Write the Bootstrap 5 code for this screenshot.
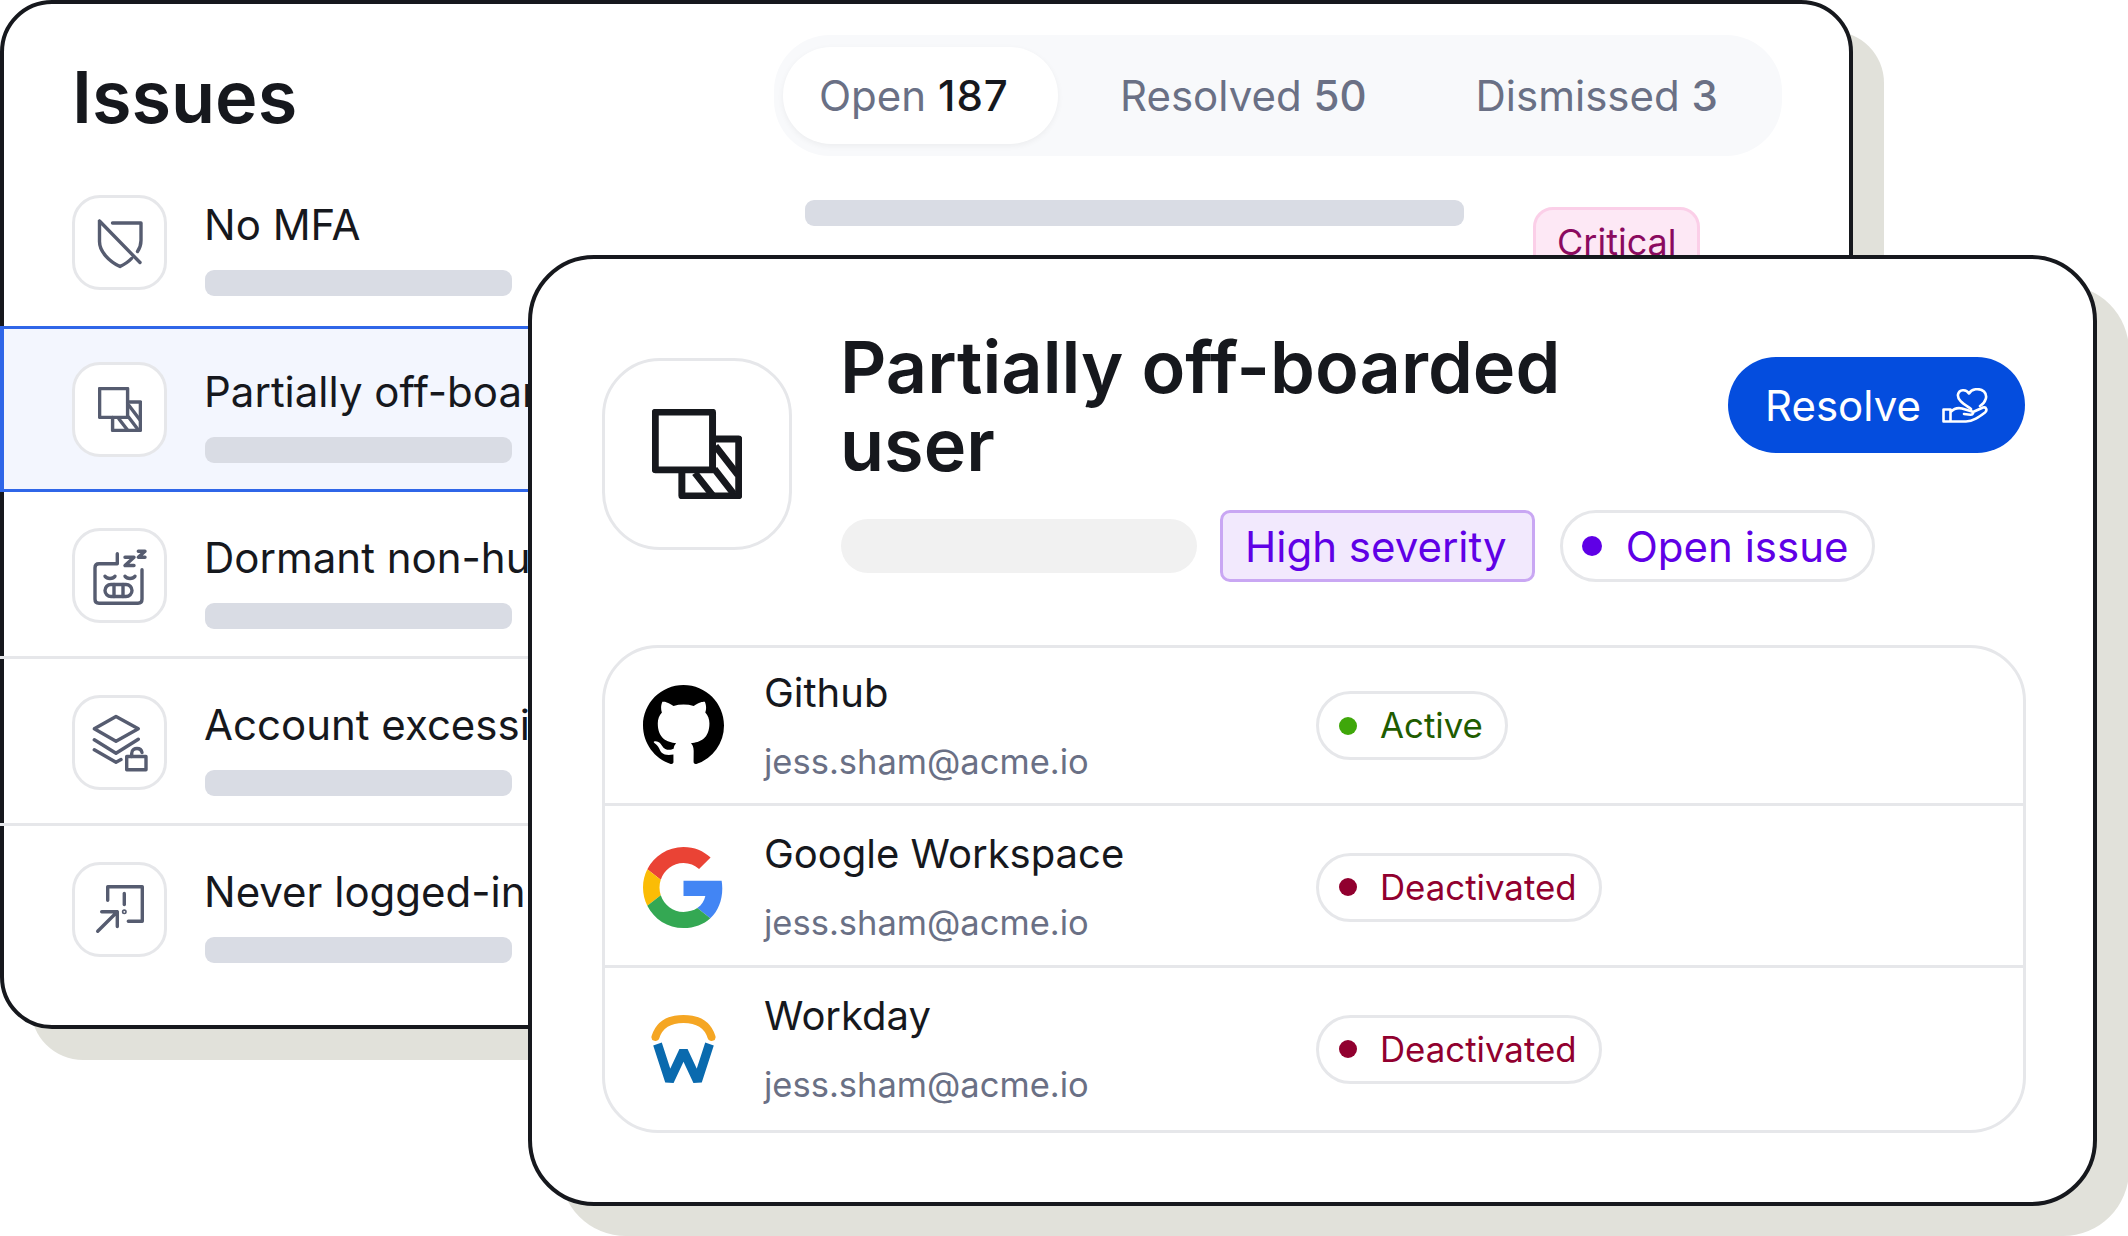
<!DOCTYPE html>
<html lang="en">

<head>
  <meta charset="UTF-8">
  <meta name="viewport" content="width=device-width, initial-scale=1.0">
  <title>Issues</title>
  <link href="https://cdn.jsdelivr.net/npm/bootstrap@5.3.0/dist/css/bootstrap.min.css" rel="stylesheet">
  <style>
    html, body {
      margin: 0;
      width: 2128px;
      height: 1236px;
      overflow: hidden;
      background: #fff;
      font-family: Inter, "Liberation Sans", sans-serif;
      font-variant-ligatures: none;
      color: #16181d;
    }
    .stage {
      position: relative;
      width: 2128px;
      height: 1236px;
      overflow: hidden;
    }
    .panel-back {
      width: 1853px;
      height: 1029px;
      background: #fff;
      border: 4px solid #16181d;
      border-radius: 52px;
      box-shadow: 31px 31px 0 #e1e1da;
    }
    .panel-front {
      position: absolute;
      left: 528px;
      top: 255px;
      width: 1569px;
      height: 951px;
      padding: 69px 68px 0 70px;
      background: #fff;
      border: 4px solid #16181d;
      border-radius: 66px;
      box-shadow: 32px 30px 0 #e1e1da;
    }
    .back-head {
      padding: 31px 67px 0 68px;
      height: 155px;
    }
    .back-head h1 {
      height: 121px;
      font-size: 72px;
      font-weight: 600;
      line-height: 123px;
      margin: 0;
    }
    .tab-wrap {
      width: 1008px;
      height: 121px;
      padding: 12px 9px;
      background: #f8f9fb;
      border-radius: 56px;
    }
    .tab-wrap .nav-link {
      height: 97px;
      padding: 0 36px;
      font-size: 42px;
      color: #6a7085;
      background: none;
      border-radius: 48px;
      white-space: nowrap;
    }
    .tab-wrap .nav-link b { font-weight: 500; }
    .tab-wrap .nav-link.active {
      width: 275px;
      color: #6a7085;
      background: #fff;
      box-shadow: 0 2px 6px rgba(22, 24, 29, .05);
    }
    .tab-wrap .nav-link.active b {
      color: #16181d;
      letter-spacing: 1px;
    }
    .tab-wrap .tab-two { margin-left: 26px; }
    .tab-wrap .tab-three { margin-left: 37px; }
    .issue-row {
      height: 166.7px;
      margin-left: -4px;
      padding: 33px 0 0 72px;
      border-top: 3px solid transparent;
      border-bottom: 3px solid #e6e7ea;
    }
    .issue-row.first-row { border-bottom-color: transparent; }
    .issue-row.picked {
      padding-left: 68px;
      background: #f3f6fe;
      border: 3px solid #2f66e8;
      border-left-width: 4px;
    }
    .icon-tile {
      width: 95px;
      height: 95px;
      flex: none;
      background: #fff;
      border: 3px solid #e6e7ea;
      border-radius: 28px;
    }
    .icon-tile svg {
      width: 60px;
      height: 60px;
      fill: none;
      stroke: #565c70;
      stroke-width: 3.4;
      stroke-linecap: round;
      stroke-linejoin: round;
    }
    .issue-name {
      width: 307px;
      margin: 6px 0 0 38px;
      flex: none;
    }
    .issue-name div:first-child {
      margin-left: -1px;
      font-size: 42px;
      line-height: 48px;
      white-space: nowrap;
    }
    .ghost-bar {
      height: 26px;
      background: #d9dce4;
      border-radius: 9px;
    }
    .issue-name .ghost-bar { margin-top: 21px; }
    .row-bar {
      width: 659px;
      margin: 5px 0 0 293px;
      flex: none;
    }
    .crit-tag {
      margin: 12px 0 0 69px;
      padding: 10px 21px;
      font-size: 36px;
      line-height: 44px;
      color: #8b0a5f;
      background: #fde8f5;
      border: 3px solid #fbcfe8;
      border-radius: 20px;
    }
    .tile-big {
      width: 190px;
      height: 192px;
      flex: none;
      margin: 30px 48px 0 0;
      border: 3px solid #e6e7ea;
      border-radius: 58px;
    }
    .tile-big svg { width: 90px; height: 90px; }
    .head-text {
      width: 888px;
      flex: none;
    }
    .panel-front h2 {
      width: 760px;
      margin: 0;
      font-size: 72px;
      font-weight: 600;
      line-height: 78px;
    }
    .tag-line {
      margin-top: 26px;
      gap: 23px;
    }
    .tag-line > div { flex: none; }
    .tag-line .tag-open { margin-left: 2px; }
    .ghost-pill {
      width: 356px;
      height: 54px;
      margin-left: 1px;
      background: #f1f1f1;
      border-radius: 27px;
    }
    .tag-soft, .tag-open {
      height: 72px;
      font-size: 42px;
      color: #5f00e6;
      border: 3px solid;
      white-space: nowrap;
    }
    .tag-soft {
      padding: 0 25px 0 22px;
      background: #f2e9fd;
      border-color: #c9a7f3;
      border-radius: 10px;
    }
    .tag-open {
      padding: 0 24px 0 19px;
      gap: 24px;
      background: #fff;
      border-color: #e6e7ea;
      border-radius: 36px;
    }
    .tag-open i {
      width: 20px;
      height: 20px;
      background: #5f00e6;
      border-radius: 50%;
    }
    .btn.btn-resolve {
      width: 297px;
      height: 96px;
      margin-top: 29px;
      flex: none;
      gap: 21px;
      padding: 0;
      font-size: 42px;
      color: #fff;
      background: #044dde;
      border: 0;
      border-radius: 48px;
    }
    .btn-resolve svg {
      width: 46px;
      height: 35px;
      fill: none;
      stroke: #fff;
      stroke-width: 2.6;
      stroke-linecap: round;
      stroke-linejoin: round;
    }
    .svc-box {
      margin-top: 63px;
      width: 1424px;
      height: 488px;
      background: #fff;
      border: 3px solid #e6e7ea;
      border-radius: 56px;
      overflow: hidden;
    }
    .svc-item {
      height: 162px;
      padding: 3px 0 0 38px;
      border-bottom: 3px solid #e6e7ea;
    }
    .svc-item:first-child {
      height: 158px;
      padding-top: 0;
    }
    .svc-item:last-child {
      padding-top: 0;
      border-bottom: 0;
    }
    .svc-logo {
      width: 81px;
      flex: none;
    }
    .svc-text {
      width: 552px;
      margin-left: 40px;
      flex: none;
    }
    .svc-text div:first-child {
      font-size: 40px;
      line-height: 48px;
      margin-top: 1px;
    }
    .svc-text div:last-child {
      margin-top: 23px;
      font-size: 34.5px;
      line-height: 44px;
      color: #6a7085;
    }
    .state-pill {
      height: 69px;
      padding: 0 22px 0 20px;
      gap: 23px;
      font-size: 34.8px;
      background: #fff;
      border: 3px solid #e6e7ea;
      border-radius: 35px;
    }
    .state-pill i {
      width: 18px;
      height: 18px;
      border-radius: 50%;
      background: currentColor;
    }
    .state-on { color: #1f5c00; }
    .state-on i { background: #3fa70a; }
    .state-off { color: #91002f; }
  </style>
</head>

<body>
  <svg width="0" height="0" class="d-block position-absolute">
    <symbol id="split-icon" viewBox="0 0 44 45" preserveAspectRatio="none">
      <path d="M1.6 1.6H29.6V30.4H1.6Z"/>
      <path d="M29.6 15H42.4V43.4H14.6V30.4"/>
      <path d="M31 18.5L42 33M30.5 30L40 42.5M21 32L29.5 43"/>
    </symbol>
  </svg>

  <div class="stage">
    <div class="panel-back">
      <div class="back-head d-flex justify-content-between">
        <h1>Issues</h1>
        <div class="tab-wrap">
          <ul class="nav flex-nowrap">
            <li class="nav-item"><a class="nav-link active d-flex align-items-center" href="#">Open&nbsp;<b>187</b></a></li>
            <li class="nav-item tab-two"><a class="nav-link d-flex align-items-center" href="#">Resolved&nbsp;<b>50</b></a></li>
            <li class="nav-item tab-three"><a class="nav-link d-flex align-items-center" href="#">Dismissed&nbsp;<b>3</b></a></li>
          </ul>
        </div>
      </div>

      <div class="issue-row first-row d-flex align-items-start">
        <div class="icon-tile d-flex align-items-center justify-content-center">
          <svg viewBox="17 17.5 60 60">
            <path d="M26.5 25.5L67 67M26.5 25.5V46C26.5 56 36 66 47 71C51 69 55.500 66.500 58.500 63M39.500 27.500H68V45C68 49 66.500 53 64.500 56"/>
          </svg>
        </div>
        <div class="issue-name">
          <div>No MFA</div>
          <div class="ghost-bar"></div>
        </div>
        <div class="ghost-bar row-bar"></div>
        <div class="crit-tag">Critical</div>
      </div>

      <div class="issue-row picked d-flex align-items-start">
        <div class="icon-tile d-flex align-items-center justify-content-center">
          <svg viewBox="-8 -8 60 60"><use href="#split-icon" width="44" height="45"/></svg>
        </div>
        <div class="issue-name">
          <div>Partially off-boarded user</div>
          <div class="ghost-bar"></div>
        </div>
      </div>

      <div class="issue-row d-flex align-items-start">
        <div class="icon-tile d-flex align-items-center justify-content-center">
          <svg viewBox="17 17.5 60 60">
            <path d="M44.300 25.300V35.300H26C23.500 35.300 22 36.800 22 39.300V70.700C22 73.200 23.500 74.700 26 74.700H65C67.500 74.700 69 73.200 69 70.700V41.300"/>
            <path d="M52 28.700H61L52 37H61M65.300 22.700H72L65.300 28.700H72"/>
            <path d="M32 47.700C34 50.700 40 50.700 42 47.700M52 47.700C54 50.700 60 50.700 62 47.700"/>
            <rect x="32" y="56" width="27" height="12" rx="6"/>
            <path d="M41 56V68M50 56V68"/>
          </svg>
        </div>
        <div class="issue-name">
          <div>Dormant non-human</div>
          <div class="ghost-bar"></div>
        </div>
      </div>

      <div class="issue-row d-flex align-items-start">
        <div class="icon-tile d-flex align-items-center justify-content-center">
          <svg viewBox="17 17.5 60 60">
            <path d="M43 21L65.300 33.300L43 45.700L21.300 33.300Z"/>
            <path d="M21.300 44.300L43 57.700L65.300 43.700M21.300 54.300L43 66.700L48 64"/>
            <path d="M53.700 61H73V74.300H53.700Z"/>
            <path d="M58.700 61V58C58.700 54 62 53 64 53C66.500 53 68.500 54.500 69 57"/>
          </svg>
        </div>
        <div class="issue-name">
          <div>Account excessive</div>
          <div class="ghost-bar"></div>
        </div>
      </div>

      <div class="issue-row first-row d-flex align-items-start">
        <div class="icon-tile d-flex align-items-center justify-content-center">
          <svg viewBox="17 17.5 60 60">
            <path d="M34.700 38.700V25.300H69.300V59.700H55.300"/>
            <path d="M51.300 32V43"/>
            <circle cx="51.300" cy="50.300" r=".8"/>
            <path d="M24.700 69.700L44.300 50.300M28.700 50.300H44.300V65"/>
          </svg>
        </div>
        <div class="issue-name">
          <div>Never logged-in</div>
          <div class="ghost-bar"></div>
        </div>
      </div>
    </div>

    <div class="panel-front">
      <div class="d-flex align-items-start">
        <div class="tile-big d-flex align-items-center justify-content-center">
          <svg viewBox="0 0 44 45" preserveAspectRatio="none" fill="none" stroke="#16181d" stroke-width="3.4" stroke-linejoin="round"><use href="#split-icon" width="44" height="45"/></svg>
        </div>
        <div class="head-text">
          <h2>Partially off-boarded user</h2>
          <div class="tag-line d-flex align-items-center">
            <div class="ghost-pill"></div>
            <div class="tag-soft d-flex align-items-center">High severity</div>
            <div class="tag-open d-flex align-items-center"><i></i>Open issue</div>
          </div>
        </div>
        <button class="btn btn-resolve d-flex align-items-center justify-content-center" type="button">
          Resolve
          <svg viewBox="0 0 46 35">
            <path d="M29 21C22 16 15 12 16 6.500C17 1.500 24 .5 27 5.500C29.500 1 37 -.5 42 3.500C46 7.500 44 14.500 38 18"/>
            <path d="M1.500 21.500H8.500V33.500H1.500ZM8.500 24C12 20.500 16 19.500 20 20.500L30 23.500C32 24.500 31 27 28.500 26.800L22 26M31 24L41 19.500C44.500 18.500 45.500 22.500 43 24.500C37 29 31 33.500 24 33.500H8.500"/>
          </svg>
        </button>
      </div>

      <div class="svc-box">
        <div class="svc-item d-flex align-items-center">
          <svg class="svc-logo" viewBox="0 0 16 16" height="81"><path fill="#000" d="M8 0C3.58 0 0 3.58 0 8c0 3.54 2.29 6.530 5.470 7.590.4.070.55-.17.55-.38 0-.19-.01-.82-.01-1.490-2.010.37-2.530-.49-2.690-.94-.09-.23-.48-.94-.82-1.130-.28-.15-.68-.52-.01-.53.63-.01 1.080.58 1.230.82.72 1.210 1.870.87 2.330.66.07-.52.28-.87.51-1.070-1.780-.2-3.640-.89-3.640-3.950 0-.87.31-1.590.82-2.150-.08-.2-.36-1.020.08-2.120 0 0 .67-.21 2.200.82.64-.18 1.320-.27 2-.27.68 0 1.360.09 2 .27 1.530-1.040 2.200-.82 2.200-.82.44 1.100.16 1.920.08 2.120.51.56.82 1.270.82 2.150 0 3.070-1.870 3.750-3.650 3.950.29.25.54.73.54 1.480 0 1.070-.01 1.930-.01 2.200 0 .21.15.46.55.38A8.013 8.013 0 0016 8c0-4.420-3.580-8-8-8z"/></svg>
          <div class="svc-text">
            <div>Github</div>
            <div>jess.sham@acme.io</div>
          </div>
          <div class="state-pill state-on d-flex align-items-center"><i></i>Active</div>
        </div>

        <div class="svc-item d-flex align-items-center">
          <svg class="svc-logo" viewBox="0 0 48 48" height="81">
            <path fill="#EA4335" d="M24 9.500c3.540 0 6.710 1.220 9.210 3.600l6.850-6.850C35.900 2.380 30.470 0 24 0 14.620 0 6.510 5.380 2.560 13.220l7.980 6.190C12.430 13.720 17.740 9.500 24 9.500z"/>
            <path fill="#4285F4" d="M46.980 24.550c0-1.570-.15-3.090-.38-4.550H24v9.020h12.940c-.58 2.960-2.260 5.480-4.780 7.180l7.730 6c4.510-4.180 7.090-10.360 7.090-17.650z"/>
            <path fill="#FBBC05" d="M10.530 28.590c-.48-1.450-.76-2.990-.76-4.590s.27-3.140.76-4.590l-7.980-6.190C.92 16.460 0 20.120 0 24c0 3.880.92 7.540 2.560 10.780l7.970-6.190z"/>
            <path fill="#34A853" d="M24 48c6.480 0 11.930-2.130 15.890-5.810l-7.730-6c-2.150 1.450-4.920 2.300-8.160 2.300-6.260 0-11.570-4.220-13.470-9.910l-7.980 6.190C6.510 42.620 14.620 48 24 48z"/>
          </svg>
          <div class="svc-text">
            <div>Google Workspace</div>
            <div>jess.sham@acme.io</div>
          </div>
          <div class="state-pill state-off d-flex align-items-center"><i></i>Deactivated</div>
        </div>

        <div class="svc-item d-flex align-items-center">
          <svg class="svc-logo" viewBox="-8.500 -3 81 74" height="74" fill="none" stroke-linecap="round">
            <path d="M4 22C8 9 19 4 32 4C45 4 56 9 60 22" stroke="#f5a623" stroke-width="8"/>
            <path d="M6 29L18 66L32 36L46 66L58 29" stroke="#0a6aae" stroke-width="9" stroke-linecap="butt" stroke-linejoin="bevel"/>
          </svg>
          <div class="svc-text">
            <div>Workday</div>
            <div>jess.sham@acme.io</div>
          </div>
          <div class="state-pill state-off d-flex align-items-center"><i></i>Deactivated</div>
        </div>
      </div>
    </div>
  </div>

  <script src="https://cdn.jsdelivr.net/npm/bootstrap@5.3.0/dist/js/bootstrap.bundle.min.js"></script>
</body>

</html>
